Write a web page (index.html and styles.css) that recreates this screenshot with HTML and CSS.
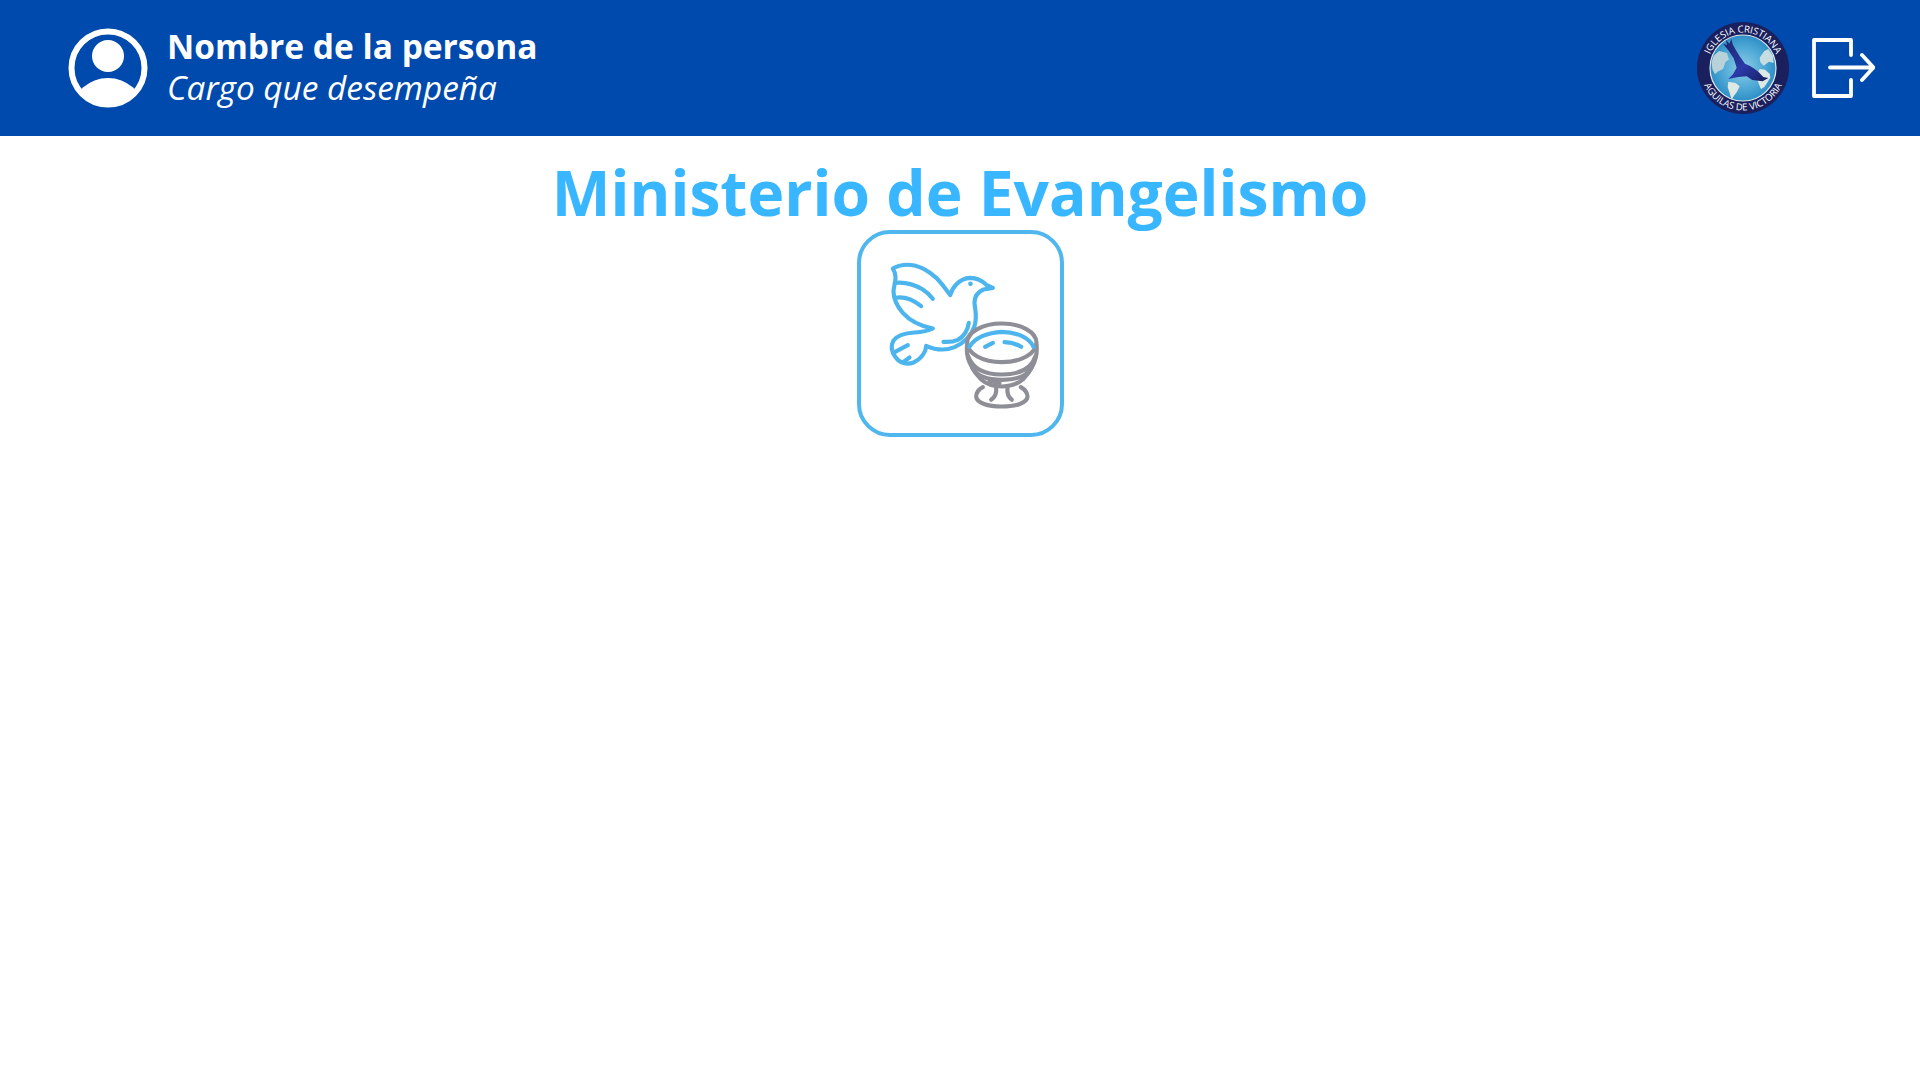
FILE: index.html
```html
<!DOCTYPE html>
<html lang="es">
<head>
<meta charset="utf-8">
<title>Ministerio de Evangelismo</title>
<link rel="stylesheet" href="styles.css">
</head>
<body>
<header class="topbar">
  <div class="person">
    <svg class="avatar" viewBox="0 0 80 80" aria-hidden="true">
      <defs><clipPath id="clipAv"><circle cx="40" cy="40" r="37"/></clipPath></defs>
      <circle cx="40" cy="40" r="36.5" fill="none" stroke="#fff" stroke-width="6"/>
      <circle cx="40" cy="28" r="16" fill="#fff"/>
      <ellipse cx="40" cy="82" rx="35" ry="32" fill="#fff" clip-path="url(#clipAv)"/>
    </svg>
    <div class="who">
      <div class="name">Nombre de la persona</div>
      <div class="role">Cargo que desempeña</div>
    </div>
  </div>
  <div class="actions">
    <svg class="logo" viewBox="0 0 92 92" aria-hidden="true">
      <defs>
        <path id="arcTop" d="M10.5 46a35.5 35.5 0 0 1 71 0"/>
        <path id="arcBot" d="M3.5 46a42.5 42.5 0 0 0 85 0"/>
        <radialGradient id="globe" cx="50%" cy="50%" r="52%">
          <stop offset="0" stop-color="#8fcde6"/><stop offset=".6" stop-color="#4fa9d6"/><stop offset="1" stop-color="#2a8cc4"/>
        </radialGradient>
        <linearGradient id="eagle" x1="0" y1="0" x2="1" y2="1">
          <stop offset="0" stop-color="#1b2468"/><stop offset=".55" stop-color="#2b3aa8"/><stop offset="1" stop-color="#161d5c"/>
        </linearGradient>
      </defs>
      <circle cx="46" cy="46" r="46" fill="#1a1f5e"/>
      <circle cx="46" cy="46" r="33" fill="url(#globe)" stroke="#dfe8ec" stroke-width="1.2"/>
      <g transform="translate(-2 -3) scale(.3333)">
        <path d="M50 128 56 110 72 96 96 102 102 122 92 128 84 150 68 158 60 166 52 150Z" fill="#b9d2da"/>
        <path d="M100 188 122 192 134 202 126 218 116 232 110 242 104 222 98 204Z" fill="#dfe8e4"/>
        <path d="M184 168 194 150 210 152 224 164 226 176 216 192 208 204 198 210 192 196 186 180Z" fill="#dfe8e4"/>
        <path d="M194 116 208 96 220 90 234 110 236 132 222 128 206 140 196 130Z" fill="#c6dde2"/>
        <path d="M84 74 96 78 93 62 103 74 109 60 113 76 122 92 134 112 150 134 165 141 178 149 190 158 205 174 220 177 203 187 172 183 155 172 130 174 100 180 114 166 125 146 116 118 100 94Z" fill="url(#eagle)"/>
      </g>
      <text class="logo-text"><textPath href="#arcTop" startOffset="50%" text-anchor="middle">IGLESIA CRISTIANA</textPath></text>
      <text class="logo-text"><textPath href="#arcBot" startOffset="50%" text-anchor="middle">AGUILAS DE VICTORIA</textPath></text>
    </svg>
    <svg class="logout" viewBox="0 0 64 60" aria-hidden="true">
      <path d="M40 17V2H3V58H40V42M19 29.5H62M51 17 62.5 29.5 51 42" fill="none" stroke="#fff" stroke-width="3.8" stroke-linecap="round" stroke-linejoin="round"/>
    </svg>
  </div>
</header>
<main class="content">
  <h1 class="title">Ministerio de Evangelismo</h1>
  <a class="card" href="#">
    <svg class="card-icon" viewBox="4.5 4.5 198 198" aria-hidden="true">
      <g class="dove" transform="translate(23 25) scale(.3333)">
        <path d="M40 42C58 32 80 28 105 33 135 40 170 65 190 92 200 105 207 115 212 122 218 100 238 72 272 70 295 70 312 82 322 92L340 100 312 105C296 112 285 125 285 145 287 170 294 185 285 215 275 245 255 265 225 278 195 290 165 285 140 274 140 290 128 312 102 324 82 332 60 326 48 308 36 292 33 274 42 258 52 244 78 236 105 234 125 233 145 230 160 222 125 215 92 200 70 175 50 152 42 130 42 110 44 85 56 68 40 42Z"/>
        <path d="M46 85C75 82 105 90 130 105 142 113 152 122 160 133M47 130C70 126 100 135 125 155M268 205C265 225 255 245 235 256 222 262 208 263 192 262M47 292 85 272M72 322 90 309"/>
        <circle cx="273" cy="88" r="7" class="eye"/>
      </g>
      <g class="font-bowl" transform="translate(93 85) scale(.3333)">
        <ellipse cx="157" cy="85" rx="104" ry="58"/>
        <path d="M53 90C50 115 54 135 66 155 72 168 80 180 95 195 112 210 135 216 157 216 180 216 202 210 220 195 235 180 243 168 249 155 260 135 264 115 261 90"/>
        <path d="M56 125C70 165 110 180 157 180 205 180 245 165 258 125M68 160C85 190 120 196 157 196M160 196C195 196 230 190 246 160"/>
        <path d="M100 218C85 226 80 236 80 247 82 266 115 276 157 276 200 276 232 266 234 247 234 236 228 226 214 218"/>
        <path d="M125 256C135 249 142 238 140 220M187 256C177 249 172 238 174 220M120 199 150 206"/>
      </g>
      <g class="water" transform="translate(93 85) scale(.3333)">
        <path d="M60 97C75 70 115 54 157 52 200 52 240 70 252 97M107 97 130 85M165 83C185 83 200 88 215 97"/>
      </g>
    </svg>
  </a>
</main>
</body>
</html>
```
FILE: styles.css
```css
* { box-sizing: border-box; }
html, body { margin: 0; padding: 0; height: 100%; background: #fff; font-family: "Open Sans", sans-serif; }
.topbar { height: 136px; background: #004aad; display: flex; align-items: center; justify-content: space-between; padding: 0 45px 0 68px; color: #fff; }
.person { display: flex; align-items: center; gap: 19px; }
.avatar { width: 80px; height: 80px; display: block; }
.who { display: flex; flex-direction: column; padding-bottom: 4px; }
.name { font-size: 33.5px; font-weight: 700; line-height: 42px; }
.role { font-size: 33.33px; font-style: italic; line-height: 41px; }
.actions { display: flex; align-items: center; gap: 22px; }
.logo { width: 92px; height: 92px; display: block; }
.logo-text { font-family: "Open Sans", sans-serif; font-size: 9.6px; font-weight: 400; fill: #fff; }
.logout { width: 64px; height: 60px; display: block; }
.content { display: flex; flex-direction: column; align-items: center; }
.title { margin: 0; padding-top: 18px; font-size: 62.3px; line-height: 76px; font-weight: 700; color: #38b6ff; }
.card { width: 207px; height: 207px; border: 4.5px solid #4fb7ee; border-radius: 33px; display: block; }
.card-icon { width: 198px; height: 198px; display: block; }
.dove, .water { fill: none; stroke: #4db5ee; stroke-width: 12.5; stroke-linecap: round; stroke-linejoin: round; }
.font-bowl { fill: none; stroke: #8e8e96; stroke-width: 12.5; stroke-linecap: round; stroke-linejoin: round; }
.eye { fill: #4db5ee; stroke: none; }
```
